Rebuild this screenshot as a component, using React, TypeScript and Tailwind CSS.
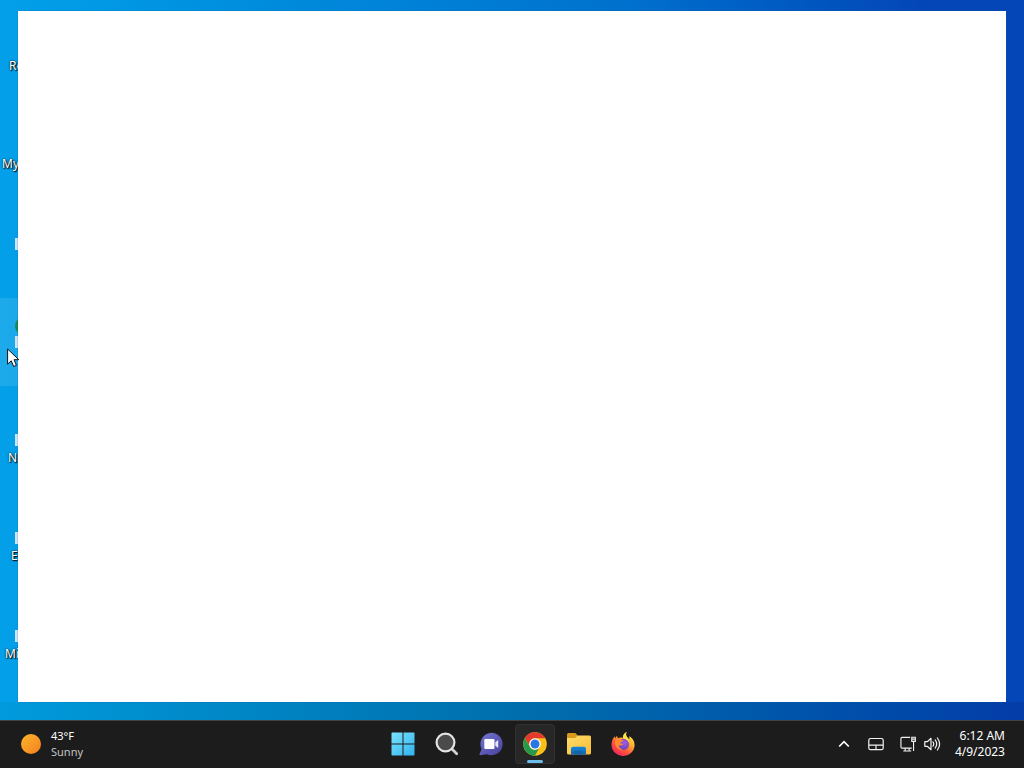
import type { ReactNode } from "react"

type Shortcut = {
  id: number
  label: string
  indent: string
  badge: boolean
  selected?: boolean
  accent?: string
}

// desktop shortcuts, mostly hidden by the open window
const shortcuts: Shortcut[] = [
  { id: 1, label: "Re", indent: "pl-[9px]", badge: false },
  { id: 2, label: "My", indent: "pl-0.5", badge: false },
  { id: 3, label: "", indent: "pl-2", badge: true },
  { id: 4, label: "", indent: "pl-2", badge: true, selected: true, accent: "bg-[#17894f]" },
  { id: 5, label: "N", indent: "pl-2", badge: true },
  { id: 6, label: "E", indent: "pl-[11px]", badge: true },
  { id: 7, label: "Mi", indent: "pl-[5px]", badge: true },
]

function DesktopShortcut({ item }: { item: Shortcut }) {
  return (
    <li className="h-[98px] py-1">
      <div className={`h-[88px] w-[76px] ${item.selected ? "bg-white/10" : ""}`}>
        <div className="flex h-[38px] items-end pl-[15px]">
          <span className={`h-5 w-8 rounded-l-full ${item.accent ?? ""}`} />
        </div>
        <div className="h-3 pl-[15px]">
          {item.badge && <span className="block h-3 w-3 bg-[#cfe4f5]" />}
        </div>
        <p
          className={`mt-1 h-4 text-xs leading-4 text-white [text-shadow:1px_1px_1px_#000,0_0_2px_#000] ${item.indent}`}
        >
          {item.label}
        </p>
      </div>
    </li>
  )
}

function StartIcon() {
  return (
    <svg viewBox="0 0 24 24" className="size-6">
      <defs>
        <linearGradient id="start" x1="0" y1="0" x2="1" y2="1">
          <stop offset="0" stopColor="#7be3fb" />
          <stop offset="1" stopColor="#2fb3ef" />
        </linearGradient>
      </defs>
      <path
        fill="url(#start)"
        d="M1 .5h10.500v11H.5V1zM12.500 .5H23l.5.500v10.500h-11zM.5 12.500h11v11H1l-.5-.5zM12.500 12.500h11V23l-.5.500H12.500z"
      />
    </svg>
  )
}

function SearchIcon() {
  return (
    <svg viewBox="0 0 24 24" className="size-6" fill="none">
      <path d="M17 17l4.700 4.700" stroke="#d2d2d2" strokeWidth="2.800" strokeLinecap="round" />
      <circle cx="10.500" cy="10.500" r="8.900" fill="#4b4b4b" stroke="#e4e4e4" strokeWidth="2.200" />
    </svg>
  )
}

function ChatIcon() {
  return (
    <svg viewBox="0 0 24 24" className="size-6">
      <defs>
        <linearGradient id="chat" x1="0" y1="0" x2="1" y2="1">
          <stop offset="0" stopColor="#7378d0" />
          <stop offset="1" stopColor="#4a3f9e" />
        </linearGradient>
      </defs>
      <path
        fill="url(#chat)"
        d="M12.500.8A11.200 11.200 0 1 1 7.800 22.200L1.200 23.200c-.7.1-1-.5-.7-1L2.600 17A11.200 11.200 0 0 1 12.500.8z"
      />
      <rect x="5.300" y="7" width="10.200" height="10" rx="1.200" fill="#fff" />
      <path d="M16.300 10.300L19.200 8v8l-2.900-2.300z" fill="#e3e4ff" />
    </svg>
  )
}

function ChromeIcon() {
  return (
    <svg viewBox="0 0 24 24" className="size-6">
      <circle cx="12" cy="12" r="11.800" fill="#fbc116" />
      <path d="M12 6.300h10.300A11.800 11.800 0 0 0 1.800 6.100L7 14.900A5.700 5.700 0 0 1 12 6.300z" fill="#e33b2e" />
      <path d="M17 14.800l-5.100 9A11.800 11.800 0 0 1 1.800 6.100L7 14.900a5.700 5.700 0 0 0 10-.1z" fill="#269a4b" />
      <circle cx="12" cy="12" r="5.800" fill="#fff" />
      <circle cx="12" cy="12" r="4.500" fill="#2a77e4" />
    </svg>
  )
}

function FolderIcon() {
  return (
    <svg viewBox="0 0 24 24" className="size-6">
      <defs>
        <linearGradient id="folder" x1="0" y1="0" x2="1" y2="1">
          <stop offset="0" stopColor="#ffdc6b" />
          <stop offset="1" stopColor="#f7bd36" />
        </linearGradient>
        <linearGradient id="folder-tray" x1="0" y1="0" x2="0" y2="1">
          <stop offset="0" stopColor="#1286dc" />
          <stop offset="1" stopColor="#1466ae" />
        </linearGradient>
      </defs>
      <path d="M0 2.500Q0 1 1.500 1h6.800l2.200 2.300V9H0z" fill="#d99a1c" />
      <path
        d="M0 6h8l2.700-2.500h11.800Q24 3.500 24 5v16q0 1.500-1.500 1.500h-21Q0 22.500 0 21z"
        fill="url(#folder)"
      />
      <path d="M4 22.500V17q0-2.200 2.200-2.200h10.600q2.200 0 2.200 2.200v5.500z" fill="url(#folder-tray)" />
      <path d="M7.500 22.500V20q0-1 1-1h6q1 0 1 1v2.500z" fill="#1462a8" />
    </svg>
  )
}

function FirefoxIcon() {
  return (
    <svg viewBox="0 0 24 24" className="size-6">
      <defs>
        <linearGradient id="fox" x1=".85" y1=".05" x2=".2" y2=".95">
          <stop offset="0" stopColor="#fff04a" />
          <stop offset=".35" stopColor="#ffb02b" />
          <stop offset=".65" stopColor="#ff593b" />
          <stop offset="1" stopColor="#f0255d" />
        </linearGradient>
        <radialGradient id="globe" cx=".6" cy=".35" r=".7">
          <stop offset="0" stopColor="#a15be5" />
          <stop offset="1" stopColor="#6440b8" />
        </radialGradient>
      </defs>
      <path
        fill="url(#fox)"
        d="M15.700 0c-1 1.600-.9 3.500.2 4.900 1 .8 1.600 1.300 2.300 2.300.3-1.200.2-2.200-.1-3.100 3.500 2 5.500 5.100 5.500 9.100A11.300 11.300 0 0 1 12 24 11.300 11.300 0 0 1 .5 12.800c0-3.600 1.200-6.300 3.200-8.500l.5 2L6 3.700l.8 2.600c2-.8 3.500-.9 5.200-.3-.3-2.500 1.200-5 3.700-6z"
      />
      <path d="M15.700 0c-2.500 1-4 3.500-3.700 6 2.300.9 4.300 2.400 5.500 4.500.8-2-.2-4.200-1.600-5.600-1.100-1.400-1.200-3.300-.2-4.900z" fill="#ffe34a" />
      <circle cx="12.400" cy="12.400" r="5.600" fill="url(#globe)" />
      <path
        fill="#ff8a2c"
        d="M4.200 7.200c2-.9 3.800-.6 5.100.3l2.900.5c.2.900-.5 1.500-2 2-.8.5-.9 1-.7 1.700 1.200-.4 2 .1 2.700.6-.8.3-1.100 1.100-2.200 1.300-1.300 0-1.900-.3-2.400-.6.2 2.600 2.100 4.300 4.600 4.300-4.800 1.800-9.400-2.900-8-10.100z"
      />
    </svg>
  )
}

const apps: { name: string; icon: ReactNode; active?: boolean }[] = [
  { name: "Start", icon: <StartIcon /> },
  { name: "Search", icon: <SearchIcon /> },
  { name: "Chat", icon: <ChatIcon /> },
  { name: "Chrome", icon: <ChromeIcon />, active: true },
  { name: "File Explorer", icon: <FolderIcon /> },
  { name: "Firefox", icon: <FirefoxIcon /> },
]

function Taskbar() {
  return (
    <footer className="grid h-12 grid-cols-[1fr_auto_1fr] items-center border-t border-[#3f4345] bg-[#1c1c1c] pb-0.5 text-white">
      <button className="flex items-center gap-2.5 justify-self-start pl-[21px] text-left text-[11px] leading-4">
        <span className="size-5 rounded-full bg-linear-to-br from-[#fbb52c] to-[#f57f1e]" />
        <span>
          <span className="block">43°F</span>
          <span className="block text-[#c4c4c4]">Sunny</span>
        </span>
      </button>

      <nav className="flex gap-1 pl-0.5">
        {apps.map((app) => (
          <button
            key={app.name}
            aria-label={app.name}
            className={`relative flex size-10 items-center justify-center rounded border ${
              app.active ? "border-[#323232] bg-[#272727]" : "border-transparent"
            }`}
          >
            {app.icon}
            {app.active && (
              <span className="absolute bottom-0 left-1/2 h-[3px] w-4 -translate-x-1/2 rounded-full bg-[#6cbdea]" />
            )}
          </button>
        ))}
      </nav>

      <div className="flex items-center justify-self-end pr-[19px]">
        <button aria-label="Show hidden icons" className="mr-[18px]">
          <svg viewBox="0 0 12 12" className="size-3" fill="none" stroke="#fff" strokeWidth="1.700">
            <path d="M1.200 8.500L6 3.700l4.800 4.800" />
          </svg>
        </button>
        <button aria-label="Touchpad" className="mr-4">
          <svg viewBox="0 0 16 16" className="size-4" fill="none" stroke="#f2f2f2" strokeWidth="1.200">
            <rect x=".8" y="2.500" width="14.400" height="11.200" rx="1.800" />
            <path d="M.8 9.200h14.400M8 9.200v4.500" />
          </svg>
        </button>
        <button aria-label="Network and volume" className="flex items-center gap-2">
          <svg viewBox="0 0 17 17" className="size-4" fill="none" stroke="#f2f2f2" strokeWidth="1.200">
            <path d="M10.800 1.500H2.200Q1 1.500 1 2.700v9q0 1.200 1.200 1.200h10.300M5.500 13v2.800M9.700 13v2.800M3.500 16h8.500" />
            <path d="M12.500 1.300h3.800v4.400h-3.800zM14.400 5.700V16M12.500 3.300h3.800" />
          </svg>
          <svg viewBox="0 0 17 16" className="h-4 w-[17px]" fill="none" stroke="#f2f2f2" strokeWidth="1.200">
            <path d="M.8 5.700h2.500L7 2.300v11.400l-3.700-3.400H.8z" strokeLinejoin="round" />
            <path d="M9 5.800q1.500 2.200 0 4.400M11.200 3.900q3 4.100 0 8.200M13.400 2q4.400 6 0 12" strokeLinecap="round" />
          </svg>
        </button>
        <button className="ml-3.5 text-right text-xs leading-4">
          <time className="block">6:12 AM</time>
          <time className="block">4/9/2023</time>
        </button>
      </div>
    </footer>
  )
}

export default function App() {
  return (
    <div className="flex min-h-screen flex-col overflow-hidden font-['Noto_Sans','Open_Sans',sans-serif]">
      <main className="relative flex flex-1 flex-col bg-linear-to-r from-[#03a0e9] via-[#0072ce] via-60% to-[#0446b8] to-90% px-[18px] pt-[11px] pb-[18px]">
        {/* darker strip of wallpaper above the taskbar */}
        <div className="absolute inset-x-0 bottom-0 h-[18px] bg-linear-to-r from-[#009bdc] via-[#006fad] via-50% to-[#053ca8]" />
        <ul className="absolute top-0 left-0">
          {shortcuts.map((item) => (
            <DesktopShortcut key={item.id} item={item} />
          ))}
        </ul>

        <section className="relative flex-1 bg-white shadow-[0_0_1px_#1b5f94]" />

        <svg viewBox="0 0 13 20" className="absolute top-[348px] left-[7px] h-5 w-[13px]">
          <path
            d="M.6 1v15.200l3.600-3.400 2.500 5.700 2.700-1.200L7 11.700h4.800z"
            fill="#fff"
            stroke="#111"
            strokeWidth="1"
          />
        </svg>
      </main>
      <Taskbar />
    </div>
  )
}
